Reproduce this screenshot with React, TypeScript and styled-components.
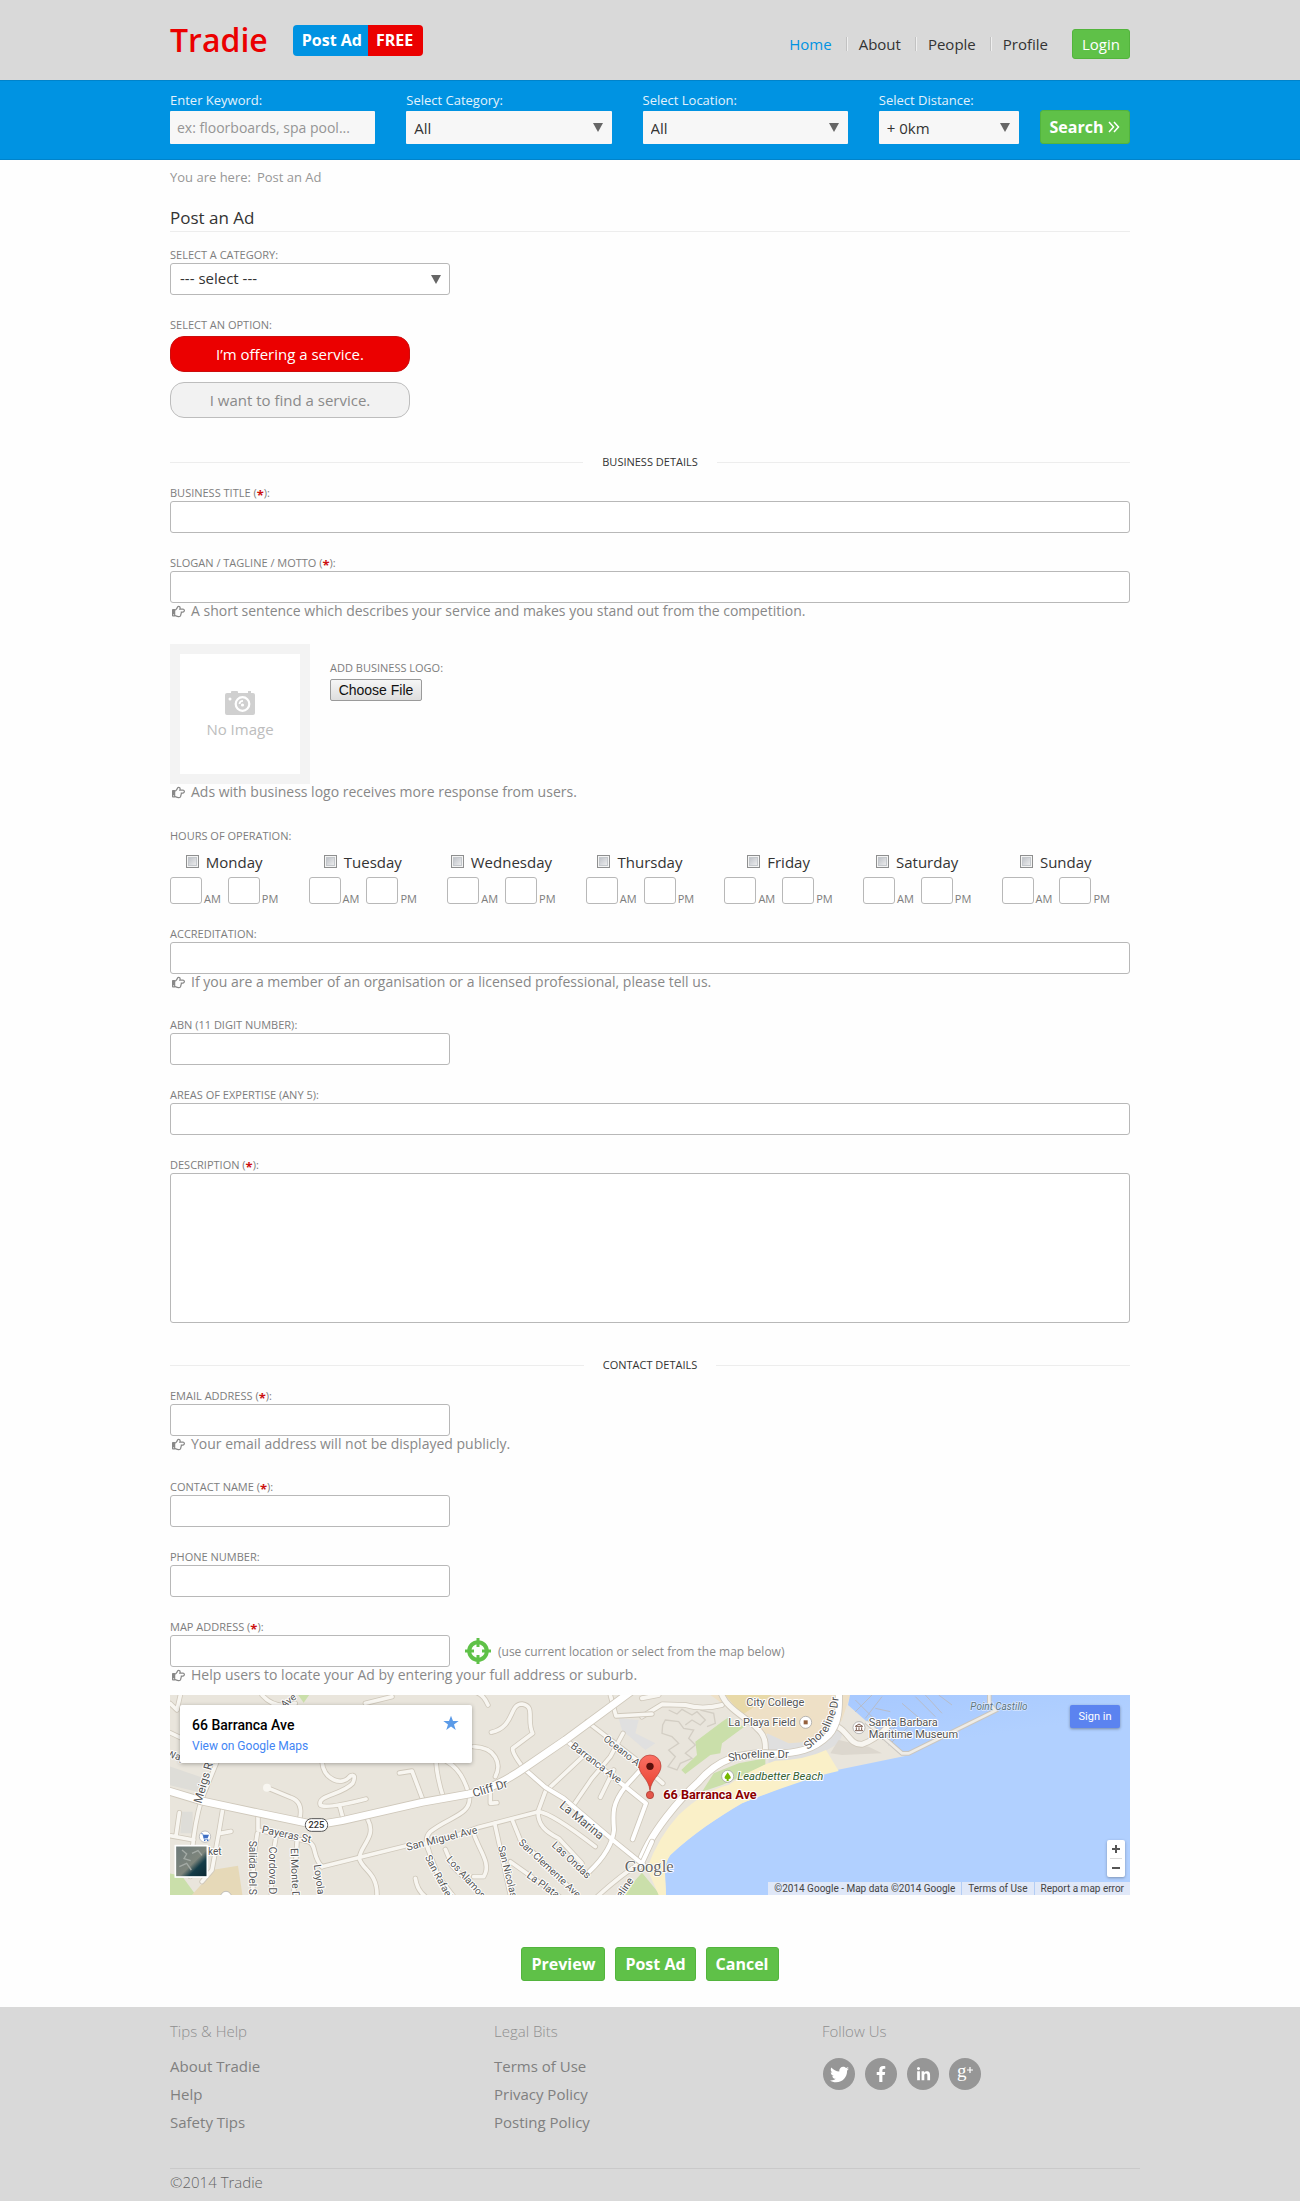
import React, { useState } from "react";
import styled, { createGlobalStyle, css } from "styled-components";
import { FaRegHandPointRight, FaTwitter, FaFacebookF, FaLinkedinIn } from "react-icons/fa";

const color = {
  blue: "#0093e2",
  red: "#eb0000",
  green: "#5fc148",
  greenEdge: "#53b43d",
  grey: "#d9d9d9",
  line: "#ededed",
  edge: "#b8b8b8",
  label: "#7d7d7d",
  hint: "#888888",
  ink: "#333333",
};

const GlobalStyle = createGlobalStyle`
  *, *::before, *::after { box-sizing: border-box; }
  body { margin: 0; background: #fefefe; color: ${color.ink}; }
  body, input, select, textarea, button {
    font-family: "Open Sans", "Noto Sans", sans-serif;
    font-size: 15px;
  }
  a { color: inherit; text-decoration: none; }
  button { cursor: pointer; }
`;

const Container = styled.div`
  max-width: 960px;
  margin: 0 auto;
`;

/* ---------- header ---------- */

const Header = styled.header`
  background: ${color.grey};
`;

const HeaderRow = styled(Container)`
  display: flex;
  align-items: center;
  height: 80px;
`;

const Logo = styled.a`
  color: ${color.red};
  font-size: 32px;
  font-weight: 600;
  line-height: 44px;
`;

const PostFree = styled.a`
  display: flex;
  margin-left: 25px;
  border-radius: 4px;
  overflow: hidden;
  color: #fff;
  font-size: 16px;
  font-weight: 700;
  line-height: 31px;
`;

const PostFreePart = styled.span<{ $tone: string }>`
  padding: 0 9px;
  background: ${(p) => p.$tone};
  & + & {
    padding-left: 8px;
    padding-right: 10px;
  }
  &:first-child {
    padding-right: 6px;
  }
`;

const Nav = styled.nav`
  display: flex;
  align-items: center;
  margin-left: auto;
  padding-top: 8px;
`;

const NavLink = styled.a<{ $active?: boolean }>`
  padding: 0 14px 0 12px;
  line-height: 14px;
  color: ${(p) => (p.$active ? color.blue : color.ink)};
  font-weight: ${(p) => (p.$active ? 500 : 400)};
  & + & {
    border-left: 1px solid #c2c2c2;
    box-shadow: inset 1px 0 0 #efefef;
  }
`;

const greenButton = css`
  border: 1px solid ${color.greenEdge};
  border-radius: 3px;
  background: ${color.green};
  color: #fff;
`;

const LoginLink = styled.a`
  ${greenButton}
  margin-left: 10px;
  padding: 0 9px;
  line-height: 28px;
`;

/* ---------- search bar ---------- */

const SearchBar = styled.div`
  background: ${color.blue};
  border-top: 1px solid #0083ca;
  border-bottom: 1px solid #0083ca;
`;

const SearchRow = styled(Container)`
  display: flex;
  gap: 21px;
  align-items: flex-end;
  height: 78px;
  padding-bottom: 15px;
`;

const SearchFields = styled.div`
  display: grid;
  flex: 1;
  grid-template-columns: 205fr 205fr 205fr 140fr;
  column-gap: 31px;
`;

const SearchField = styled.div`
  display: flex;
  flex-direction: column;
  & label {
    color: #e3f2fc;
    font-size: 13px;
    line-height: 22px;
  }
`;

const flatBox = css`
  width: 100%;
  height: 33px;
  border: 0;
  border-radius: 1px;
  background: #f7f7f7;
`;

const KeywordInput = styled.input`
  ${flatBox}
  padding: 0 7px;
  font-size: 14px;
  &::placeholder {
    color: #959595;
    opacity: 1;
  }
`;

const SelectShell = styled.div`
  display: grid;
  & > * {
    grid-area: 1 / 1;
  }
  & > svg {
    place-self: center end;
    margin-right: 9px;
    pointer-events: none;
  }
`;

const FlatSelect = styled.select`
  ${flatBox}
  appearance: none;
  padding: 0 8px;
  color: ${color.ink};
`;

const SearchButton = styled.button`
  ${greenButton}
  display: flex;
  align-items: center;
  justify-content: center;
  gap: 5px;
  width: 90px;
  height: 34px;
  padding: 0;
  font-size: 16px;
  font-weight: 700;
`;

/* ---------- form ---------- */

const Breadcrumb = styled.nav`
  display: flex;
  gap: 6px;
  padding-top: 8px;
  color: #979797;
  font-size: 13px;
  line-height: 18px;
`;

const PageTitle = styled.h1`
  margin: 20px 0 15px;
  padding-bottom: 1px;
  border-bottom: 1px solid ${color.line};
  font-size: 17px;
  font-weight: 400;
  line-height: 24px;
`;

const Field = styled.div<{ $space?: number }>`
  margin-bottom: ${(p) => p.$space ?? 22}px;
`;

const labelText = css`
  display: block;
  color: ${color.label};
  font-size: 11px;
  line-height: 16px;
`;

const Label = styled.label`
  ${labelText}
`;

const GroupLabel = styled.div`
  ${labelText}
`;

const Star = styled.span`
  color: #cc1111;
  font-weight: 700;
  font-size: 13px;
  line-height: 0;
  vertical-align: -3px;
`;

const outlined = css`
  display: block;
  border: 1px solid ${color.edge};
  border-radius: 3px;
  background: #fff;
  color: ${color.ink};
`;

const TextInput = styled.input<{ $short?: boolean }>`
  ${outlined}
  width: ${(p) => (p.$short ? "280px" : "100%")};
  height: 32px;
  padding: 0 9px;
`;

const TextArea = styled.textarea`
  ${outlined}
  width: 100%;
  height: 150px;
  padding: 6px 9px;
  resize: none;
`;

const CategoryShell = styled(SelectShell)`
  width: 280px;
`;

const CategorySelect = styled.select`
  ${outlined}
  appearance: none;
  width: 100%;
  height: 32px;
  padding: 0 9px 2px;
`;

const HintLine = styled.p`
  display: flex;
  align-items: center;
  gap: 6px;
  margin: 0;
  padding-left: 2px;
  color: ${color.hint};
  font-size: 14px;
  line-height: 16px;
`;

const OptionGroup = styled.div`
  display: grid;
  gap: 10px;
  width: 240px;
  margin-top: 3px;
`;

const OptionButton = styled.button`
  height: 36px;
  border: 1px solid #bdbdbd;
  border-radius: 14px;
  background: #f2f2f2;
  color: #8a8a8a;
  &[aria-pressed="true"] {
    border-color: #cc0d0d;
    background: ${color.red};
    color: #fff;
    font-weight: 500;
  }
`;

const SectionHeading = styled.h2<{ $top: number }>`
  display: flex;
  align-items: center;
  gap: 19px;
  margin: ${(p) => p.$top}px 0 15px;
  font-size: 11px;
  font-weight: 400;
  line-height: 16px;
  &::before,
  &::after {
    content: "";
    flex: 1;
    border-top: 1px solid ${color.line};
  }
`;

const LogoRow = styled.div`
  display: flex;
  gap: 20px;
`;

const NoImage = styled.div`
  display: flex;
  flex-direction: column;
  align-items: center;
  justify-content: center;
  width: 140px;
  height: 140px;
  padding-top: 6px;
  border: 10px solid #f3f3f3;
  background: #fff;
  color: #bdbdbd;
  line-height: 28px;
`;

const Upload = styled.div`
  padding-top: 16px;
`;

const FileInput = styled.input`
  display: block;
  width: 92px;
  height: 22px;
  margin-top: 3px;
  overflow: hidden;
  &::file-selector-button {
    width: 92px;
    height: 22px;
    margin: 0;
    padding: 0;
    border: 1px solid #9a9a9a;
    border-radius: 2px;
    background: linear-gradient(#f6f6f6, #dedede);
    color: #111;
    font: 14px "Liberation Sans", Arial, sans-serif;
  }
`;

const Days = styled.div`
  display: flex;
  justify-content: space-between;
  padding: 7px 20px 0 0;
`;

const Day = styled.div`
  display: flex;
  flex-direction: column;
  gap: 4px;
`;

const DayLabel = styled.label`
  display: flex;
  align-items: center;
  justify-content: center;
  gap: 7px;
  line-height: 22px;
`;

const Tick = styled.input`
  appearance: none;
  width: 13px;
  height: 13px;
  margin: 0 0 1px;
  border: 1px solid #8e8f8f;
  background: linear-gradient(135deg, #b5b9c0, #f6f6f6);
  box-shadow: inset 0 0 0 1px #f4f4f4, inset 0 0 0 2px #c4c8cc;
  &:checked {
    background: ${color.blue};
  }
`;

const Times = styled.div`
  display: flex;
  align-items: flex-end;
  gap: 7px;
`;

const Time = styled.label`
  ${labelText}
  display: flex;
  align-items: flex-end;
  gap: 2px;
  line-height: 11px;
`;

const TimeInput = styled.input`
  ${outlined}
  width: 32px;
  height: 27px;
  padding: 0 4px;
  font-size: 13px;
`;

const AddressRow = styled.div`
  display: flex;
  align-items: center;
  color: ${color.hint};
  font-size: 12px;
`;

const LocateButton = styled.button`
  display: flex;
  margin: 0 7px 0 15px;
  padding: 0;
  border: 0;
  background: none;
`;

/* ---------- map ---------- */

const MapFrame = styled.div`
  position: relative;
  height: 200px;
  margin-top: 12px;
  overflow: hidden;
  font-family: Roboto, sans-serif;
  & > svg {
    display: block;
    width: 100%;
    height: 100%;
  }
`;

const PlaceCard = styled.div`
  position: absolute;
  top: 10px;
  left: 10px;
  display: flex;
  justify-content: space-between;
  width: 292px;
  height: 58px;
  padding: 10px 13px 0 12px;
  border-radius: 2px;
  background: #fff;
  box-shadow: 0 1px 4px rgba(0, 0, 0, 0.3);
`;

const PlaceName = styled.strong`
  display: block;
  color: #000;
  font-size: 14px;
  font-weight: 500;
  line-height: 21px;
`;

const PlaceLink = styled.a`
  color: #4285f4;
  font-size: 12px;
  line-height: 20px;
`;

const SignIn = styled.a`
  position: absolute;
  top: 10px;
  right: 10px;
  width: 50px;
  border-radius: 2px;
  background: #5b83f0;
  box-shadow: 0 1px 3px rgba(0, 0, 0, 0.35);
  color: #fff;
  font-size: 11px;
  line-height: 23px;
  text-align: center;
`;

const Zoom = styled.div`
  position: absolute;
  right: 5px;
  bottom: 18px;
  display: grid;
  width: 18px;
  padding: 0 3px;
  border-radius: 2px;
  background: #fff;
  box-shadow: 0 1px 3px rgba(0, 0, 0, 0.3);
`;

const ZoomButton = styled.button`
  display: grid;
  place-items: center;
  height: 18px;
  padding: 0;
  border: 0;
  background: none;
  & + & {
    height: 19px;
    border-top: 1px solid #dddddd;
  }
`;

const Attribution = styled.div`
  position: absolute;
  right: 0;
  bottom: 0;
  display: flex;
  color: #444;
  font-size: 10px;
  line-height: 13px;
  & > * {
    padding: 0 6px;
    background: rgba(240, 240, 245, 0.75);
  }
  & > * + * {
    border-left: 1px solid #b3cdf5;
  }
`;

/* ---------- actions and footer ---------- */

const Actions = styled.div`
  display: flex;
  justify-content: center;
  gap: 10px;
  padding: 52px 0 26px;
`;

const ActionButton = styled.button`
  ${greenButton}
  height: 34px;
  padding: 0 9px;
  font-size: 16px;
  font-weight: 700;
`;

const Footer = styled.footer`
  background: ${color.grey};
  color: #808080;
`;

const FooterBody = styled(Container)`
  padding: 13px 0 9px;
`;

const FooterColumns = styled.div`
  display: grid;
  grid-template-columns: 324fr 328fr 308fr;
  padding-bottom: 32px;
`;

const FooterHeading = styled.h3`
  margin: 0 0 10px;
  color: #8f8f8f;
  font-size: 15px;
  font-weight: 300;
  line-height: 22px;
`;

const FooterLinks = styled.ul`
  margin: 0;
  padding: 0;
  list-style: none;
  line-height: 28px;
`;

const Socials = styled.div`
  display: flex;
  gap: 10px;
  padding: 6px 0 0 1px;
`;

const SocialLink = styled.a`
  display: grid;
  place-items: center;
  width: 32px;
  height: 32px;
  border-radius: 50%;
  background: #969696;
  color: #fff;
`;

const Copyright = styled.p`
  margin: 0 -10px 0 0;
  padding-top: 2px;
  border-top: 1px solid #cacaca;
  font-weight: 300;
  color: #666;
  line-height: 22px;
`;

/* ---------- parts ---------- */

const Arrow = () => (
  <svg width="10" height="9" viewBox="0 0 10 9" aria-hidden="true">
    <path d="M0 0h10L5 9z" fill="#666" />
  </svg>
);

const Required = () => (
  <>
    (<Star>*</Star>):
  </>
);

const Hint = ({ children }: { children: React.ReactNode }) => (
  <HintLine>
    <FaRegHandPointRight size={13} aria-hidden="true" />
    {children}
  </HintLine>
);

type TextFieldProps = {
  id: string;
  label: string;
  required?: boolean;
  short?: boolean;
  hint?: string;
  space?: number;
};

const TextField = ({ id, label, required, short, hint, space }: TextFieldProps) => (
  <Field $space={space}>
    <Label htmlFor={id}>
      {label}
      {required ? <> <Required /></> : ":"}
    </Label>
    <TextInput id={id} $short={short} />
    {hint && <Hint>{hint}</Hint>}
  </Field>
);

const SearchSelect = ({ id, label, value }: { id: string; label: string; value: string }) => (
  <SearchField>
    <label htmlFor={id}>{label}</label>
    <SelectShell>
      <FlatSelect id={id}>
        <option>{value}</option>
      </FlatSelect>
      <Arrow />
    </SelectShell>
  </SearchField>
);

const Camera = () => (
  <svg width="30" height="24" viewBox="0 0 30 24" aria-hidden="true">
    <path
      fill="#d0d0d0"
      d="M2 2h4V1q0-1 1-1h5q1 0 1 1v1h10V0h3v2h2q2 0 2 2v18q0 2-2 2H2q-2 0-2-2V4q0-2 2-2z"
    />
    <circle cx="5" cy="8" r="1.500" fill="#fff" />
    <circle cx="17.500" cy="13" r="6.800" fill="none" stroke="#fff" strokeWidth="2.200" />
    <path d="M14.500 13a3.500 3.500 0 0 1 3.500-3.200" fill="none" stroke="#fff" strokeWidth="1.800" />
    <circle cx="17.500" cy="14" r="1.600" fill="#fff" />
  </svg>
);

const Target = () => (
  <svg width="26" height="26" viewBox="0 0 26 26" aria-hidden="true">
    <circle cx="13" cy="13" r="8.800" fill="none" stroke={color.green} strokeWidth="4" />
    <path
      d="M13 0v9M13 17v9M0 13h9M17 13h9"
      stroke={color.green}
      strokeWidth="3"
    />
  </svg>
);

/* The map is drawn in units of a third of a pixel. */
const leftMinor = [
  "M165 215L118 330Q98 400 92 470L85 560",
  "M480 215C485 270 540 290 565 258Q585 250 572 280C540 315 465 315 475 345Q490 358 612 327",
  "M315 293L385 322Q425 335 413 388",
  "M533 348L543 385",
  "M712 249L750 243L782 328",
  "M822 215Q825 265 845 325",
  "M855 215C900 240 915 290 922 318C930 375 860 380 805 425Q785 445 800 480",
  "M935 170C1000 172 1020 220 1000 260",
  "M988 127C1060 110 1040 42 1080 42C1122 48 1092 90 1112 130L1052 175Q1050 190 1085 235",
  "M978 45Q965 15 945 8",
  "M985 290L985 340L1005 338",
  "M1275 95L1470 245",
  "M1383 130L1345 200L1290 265L1235 345",
  "M1262 200L1150 305L1128 365",
  "M1355 240L1315 322",
  "M1345 15L1362 78L1470 72",
  "M480 530L730 468L830 455L950 412L1130 365Q1170 370 1300 470",
  "M618 390C645 440 592 470 592 505C600 540 645 545 645 615",
  "M288 380L288 420L440 455C465 465 450 500 480 530",
  "M1128 365C1128 405 1150 425 1190 445L1260 520",
  "M998 400L1020 500L1045 615",
  "M1050 388L1075 450L1215 585",
  "M1045 515L1200 625",
  "M935 430C950 480 990 520 965 560L935 560",
  "M795 470L830 560L875 620",
  "M850 478L872 530L955 610",
  "M760 565Q765 600 790 620",
  "M286 430Q270 520 273 615",
  "M342 440Q325 530 328 615",
  "M405 455L395 615",
  "M182 358L170 430L150 540L120 575M175 430L207 424",
  "M52 368L42 438M24 437L95 450",
  "M1440 515Q1370 560 1300 625",
  "M24 128L60 145M24 40L45 60L55 15",
  "M300 15Q340 60 400 40M610 40L690 20",
];

const leftStreets = [
  "M1085 235L1150 292L1205 325L1350 448L1445 525",
  "M1208 148L1390 290L1452 340L1412 448",
  "M1440 235L1390 290C1350 340 1352 370 1356 420Q1350 480 1282 545",
  "M1470 455L1440 520",
];

const cliffDrive = "M10 300L120 333L285 368L463 405L540 392L780 337L920 312Q1000 295 1090 232L1210 150L1420 -5";

const rightMinor = [
  "M0 80L60 43L130 45Q180 60 240 45",
  "M0 25L50 15",
  "M45 265L62 280",
];

const lots = [
  "M70 90L110 95L125 115L155 120L140 145L160 165L130 190L150 205L115 220L105 240L78 230L100 200L80 180L110 160L90 140L60 130L62 105Z",
  "M80 60L105 72L120 58L150 75L165 65L190 90L175 105L150 90L130 105",
  "M175 60L215 70L220 100L195 110",
];

type MapLabel = [text: string, x: number, y: number, angle: number, size: number];

const leftLabels: MapLabel[] = [
  ["Ave", 366, 55, -38, 30],
  ["Way", 12, 200, 15, 30],
  ["Meigs R", 118, 342, -74, 35],
  ["Cliff Dr", 936, 322, -17, 35],
  ["Payeras St", 298, 428, 12, 32],
  ["Salida Del S", 260, 452, 90, 31],
  ["Cordova D", 322, 470, 90, 31],
  ["El Monte D", 386, 475, 88, 31],
  ["Loyola", 455, 525, 82, 31],
  ["San Miguel Ave", 736, 482, -14, 32],
  ["San Rafael", 788, 502, 62, 30],
  ["Los Alamos", 852, 510, 48, 30],
  ["San Nicolas", 1008, 470, 76, 30],
  ["San Clemente Ave", 1068, 460, 43, 30],
  ["Las Ondas", 1168, 468, 43, 31],
  ["La Plata", 1092, 560, 36, 31],
  ["La Marina", 1190, 350, 39, 36],
  ["Barranca Ave", 1224, 172, 37, 31],
  ["Oceano Ave", 1322, 150, 38, 30],
  ["Shoreline", 1340, 680, -55, 32],
  ["ket", 138, 496, 0, 30],
];

const rightLabels: MapLabel[] = [
  ["City College", 313, 47, 0, 33],
  ["La Playa Field", 259, 107, 0, 33],
  ["Santa Barbara", 680, 107, 0, 33],
  ["Maritime Museum", 680, 143, 0, 33],
];

const MapText = ({ items }: { items: MapLabel[] }) => (
  <g fill="#555" stroke="#fff" strokeWidth="6" strokeLinejoin="round" paintOrder="stroke">
    {items.map(([text, x, y, angle, size]) => (
      <text key={text} fontSize={size} transform={`translate(${x} ${y}) rotate(${angle})`}>
        {text}
      </text>
    ))}
  </g>
);

const Roads = ({ paths, width, fill = "#f8f6f1" }: { paths: string[]; width: number; fill?: string }) => (
  <g fill="none" strokeLinecap="round" strokeLinejoin="round">
    {paths.map((d) => (
      <path key={d} d={d} stroke="#cfc8bb" strokeWidth={width + 5} />
    ))}
    {paths.map((d) => (
      <path key={d} d={d} stroke={fill} strokeWidth={width} />
    ))}
  </g>
);

const MapDrawing = () => (
  <svg viewBox="0 0 2880 600" preserveAspectRatio="xMidYMid slice" role="img" aria-label="Map of 66 Barranca Ave">
    <defs>
      <linearGradient id="sea" x1="0" y1="0" x2="0.350" y2="1">
        <stop offset="0" stopColor="#a3c6ff" />
        <stop offset="0.400" stopColor="#b1d0ff" />
      </linearGradient>
      <linearGradient id="pin" x1="0" y1="0" x2="0" y2="1">
        <stop offset="0" stopColor="#fb7064" />
        <stop offset="1" stopColor="#e8402f" />
      </linearGradient>
      <linearGradient id="photo" x1="0" y1="0" x2="1" y2="1">
        <stop offset="0" stopColor="#6c7a7a" />
        <stop offset="0.550" stopColor="#7e857c" />
        <stop offset="0.700" stopColor="#143c48" />
        <stop offset="1" stopColor="#0a2731" />
      </linearGradient>
    </defs>
    <rect width="2880" height="600" fill="#e9e5dc" />

    <g transform="translate(1416 -15)">
      <path d="M205 15H625L600 90L545 150L440 165L385 140L290 80L240 40Z" fill="#eee0c6" />
      <path d="M250 15H390L300 75Z" fill="#e8d9a8" />
      <path d="M-70 85L-10 90L-20 130L40 160L10 180L-60 120Z" fill="#e0e0e0" />
      <path d="M375 130L440 160L500 155L560 120L610 110L590 160L520 200L380 220Z" fill="#dfdfdf" />
      <path d="M240 95L262 80L270 105L310 108L240 160L235 190L205 195L130 252L118 240L165 195L160 155Z" fill="#cadfaa" />
      <path d="M180 305L215 250L290 220L370 205V225L320 250L240 285Z" fill="#cadfaa" />
      <path d="M0 548L55 615H-60Z" fill="#cadfaa" />
      <path
        d="M625 10L618 45L680 100L775 188L800 196L720 212L585 240C500 258 350 320 300 340C230 380 150 435 85 495C60 530 72 570 72 615H1480V10Z"
        fill="url(#sea)"
      />
      <path
        d="M552 180L590 243C500 262 350 320 300 340C230 380 150 435 85 495C60 530 72 570 72 615H50L15 535Q50 440 110 375Q190 300 260 285Q330 235 400 212Q490 210 552 180Z"
        fill="#faf0c8"
      />
      <path d="M590 150L680 170L720 190L600 195L565 190Z" fill="#dcd7ce" />
      <g stroke="#b7bcc9" strokeWidth="3" fill="none">
        <path d="M640 30L700 90M690 15L640 65M720 20L670 85M700 55L745 65M720 150L775 95M740 165L800 110M720 90L770 140M780 40L850 100M820 20L880 80M850 15L900 70M890 15L930 45" />
      </g>
      <path d="M672 95L780 190L800 190L1060 62L1042 40V15" fill="none" stroke="#c9c6c0" strokeWidth="14" />
      <path d="M672 95L780 190L800 190L1060 62L1042 40V15" fill="none" stroke="#efece6" strokeWidth="8" />
      <g fill="none" stroke="#d3cec4" strokeWidth="4">
        {lots.map((d) => (
          <path key={d} d={d} />
        ))}
      </g>
      <Roads paths={rightMinor} width={12} />
      <Roads paths={["M235 0C245 55 320 85 345 115C375 140 370 170 370 190", "M590 112C620 130 625 165 660 163Q700 150 735 112"]} width={15} />
      <Roads
        paths={["M-10 530C20 430 120 320 170 275C230 205 290 192 370 190C470 195 520 175 560 135C592 100 592 50 590 0"]}
        width={19}
        fill="#fff"
      />
    </g>

    <g transform="translate(-24 -15)">
      <path d="M405 10H445L425 38Z" fill="#cadfaa" />
      <path d="M20 228L118 262V308L20 285ZM60 365H92V430H55Z" fill="#deddd8" />
      <path d="M20 550L60 558L105 620H20Z" fill="#cadfaa" />
      <path d="M150 540L228 527L242 620H85L130 570Z" fill="#e6d9b8" />
      <Roads paths={leftMinor} width={11} />
      <Roads paths={leftStreets} width={12} fill="#fff" />
      <circle cx="315" cy="293" r="12" fill="#f8f6f1" />
      <Roads paths={[cliffDrive]} width={21} fill="#fff" />
      <rect x="430" y="386" width="67" height="38" rx="18" fill="#fff" stroke="#555" strokeWidth="3" />
      <text x="463" y="415" fontSize="28" fontWeight="500" textAnchor="middle" fill="#333">225</text>
      <MapText items={leftLabels} />
      <circle cx="129" cy="440" r="17" fill="#fff" stroke="#aaa" strokeWidth="2" />
      <path d="M123 434h18l-4 11h-12z" fill="#3f6fc4" />
      <path d="M117 431h5l5 17h12" fill="none" stroke="#3f6fc4" strokeWidth="2" />
      <path d="M126 449h4v4h-4zM135 449h4v4h-4z" fill="#3f6fc4" />
      <circle cx="192" cy="620" r="16" fill="#fff" stroke="#aaa" strokeWidth="2" />
      <rect x="40" y="467" width="96" height="94" fill="url(#photo)" stroke="#fff" strokeWidth="5" />
      <path d="M60 480l14 12l-8 14l20 6M90 490l18-8l12 14M52 530l22-10l14 20" fill="none" stroke="#a3aaa5" strokeWidth="4" />
      <text
        x="1388" y="545" fontSize="50" fill="#666" stroke="#fff" strokeWidth="5" paintOrder="stroke"
        fontFamily="'Liberation Serif', serif"
      >
        Google
      </text>
    </g>

    <g transform="translate(1416 -15)">
      <MapText items={rightLabels} />
      <g fill="#555" stroke="#fff" strokeWidth="6" strokeLinejoin="round" paintOrder="stroke" fontSize="34">
        <text transform="translate(260 215) rotate(-9)">Shore</text>
        <text transform="translate(345 203)">line Dr</text>
        <text transform="translate(498 180) rotate(-42)">Shor</text>
        <text transform="translate(556 130) rotate(-68)">eline</text>
        <text transform="translate(586 56) rotate(-83)">Dr</text>
      </g>
      <text x="985" y="61" fontSize="30" fontStyle="italic" fill="#5b7680" stroke="#dbe8ff" strokeWidth="4" paintOrder="stroke">
        Point Castillo
      </text>
      <circle cx="491" cy="97" r="18" fill="#fff" stroke="#999" strokeWidth="2" />
      <rect x="485" y="91" width="12" height="12" fill="#94603d" />
      <circle cx="651" cy="113" r="18" fill="#fff" stroke="#999" strokeWidth="2" />
      <path d="M640 109l11-7l11 7zM643 112v8M651 112v8M659 112v8M639 122h24" fill="none" stroke="#7a5a4d" strokeWidth="3" />
      <circle cx="257" cy="259" r="18" fill="#fff" stroke="#999" strokeWidth="2" />
      <path d="M257 247l8 12q4 8-5 8v6h-6v-6q-9 0-5-8z" fill="#76b800" />
      <text x="286" y="270" fontSize="34" fontStyle="italic" fill="#35622f" stroke="#fff" strokeWidth="6" paintOrder="stroke">
        Leadbetter Beach
      </text>
      <circle cx="24" cy="315" r="11" fill="#e4564a" stroke="#a33329" strokeWidth="2" />
      <path
        d="M24 302C20 265-9 255-9 228a33 33 0 0 1 66 0C57 255 28 265 24 302Z"
        fill="url(#pin)" stroke="#b03a30" strokeWidth="2"
      />
      <circle cx="24" cy="229" r="11" fill="#5a100c" />
      <text x="64" y="328" fontSize="38" fontWeight="700" fill="#8b0000" stroke="#fff" strokeWidth="6" paintOrder="stroke">
        66 Barranca Ave
      </text>
    </g>
  </svg>
);

const days = ["Monday", "Tuesday", "Wednesday", "Thursday", "Friday", "Saturday", "Sunday"];
const options = ["I’m offering a service.", "I want to find a service."];

export default function App() {
  const [option, setOption] = useState(0);

  return (
    <>
      <GlobalStyle />
      <Header>
        <HeaderRow>
          <Logo href="#">Tradie</Logo>
          <PostFree href="#">
            <PostFreePart $tone={color.blue}>Post Ad</PostFreePart>
            <PostFreePart $tone={color.red}>FREE</PostFreePart>
          </PostFree>
          <Nav>
            <NavLink href="#" $active>Home</NavLink>
            <NavLink href="#">About</NavLink>
            <NavLink href="#">People</NavLink>
            <NavLink href="#">Profile</NavLink>
            <LoginLink href="#">Login</LoginLink>
          </Nav>
        </HeaderRow>
      </Header>

      <SearchBar>
        <SearchRow>
          <SearchFields>
            <SearchField>
              <label htmlFor="keyword">Enter Keyword:</label>
              <KeywordInput id="keyword" placeholder="ex: floorboards, spa pool..." />
            </SearchField>
            <SearchSelect id="search-category" label="Select Category:" value="All" />
            <SearchSelect id="search-location" label="Select Location:" value="All" />
            <SearchSelect id="search-distance" label="Select Distance:" value="+ 0km" />
          </SearchFields>
          <SearchButton type="button">
            Search
            <svg width="12" height="12" viewBox="0 0 12 12" aria-hidden="true">
              <path d="M1 1l4.500 5L1 11M6 1l4.500 5L6 11" fill="none" stroke="#fff" strokeWidth="1.500" />
            </svg>
          </SearchButton>
        </SearchRow>
      </SearchBar>

      <Container as="main">
        <Breadcrumb aria-label="Breadcrumb">
          <span>You are here:</span>
          <a href="#">Post an Ad</a>
        </Breadcrumb>
        <PageTitle>Post an Ad</PageTitle>

        <form onSubmit={(e) => e.preventDefault()}>
          <Field>
            <Label htmlFor="category">SELECT A CATEGORY:</Label>
            <CategoryShell>
              <CategorySelect id="category">
                <option>--- select ---</option>
              </CategorySelect>
              <Arrow />
            </CategoryShell>
          </Field>
          <Field $space={0}>
            <GroupLabel id="option-label">SELECT AN OPTION:</GroupLabel>
            <OptionGroup role="group" aria-labelledby="option-label">
              {options.map((text, i) => (
                <OptionButton key={text} type="button" aria-pressed={option === i} onClick={() => setOption(i)}>
                  {text}
                </OptionButton>
              ))}
            </OptionGroup>
          </Field>

          <SectionHeading $top={36}>BUSINESS DETAILS</SectionHeading>
          <TextField id="title" label="BUSINESS TITLE" required />
          <TextField
            id="slogan"
            label="SLOGAN / TAGLINE / MOTTO"
            required
            hint="A short sentence which describes your service and makes you stand out from the competition."
            space={25}
          />
          <Field $space={28}>
            <LogoRow>
              <NoImage>
                <Camera />
                No Image
              </NoImage>
              <Upload>
                <Label htmlFor="logo">ADD BUSINESS LOGO:</Label>
                <FileInput id="logo" type="file" />
              </Upload>
            </LogoRow>
            <Hint>Ads with business logo receives more response from users.</Hint>
          </Field>
          <Field>
            <GroupLabel>HOURS OF OPERATION:</GroupLabel>
            <Days>
              {days.map((day) => (
                <Day key={day}>
                  <DayLabel>
                    <Tick type="checkbox" />
                    {day}
                  </DayLabel>
                  <Times>
                    <Time>
                      <TimeInput aria-label={`${day} opening time`} />
                      AM
                    </Time>
                    <Time>
                      <TimeInput aria-label={`${day} closing time`} />
                      PM
                    </Time>
                  </Times>
                </Day>
              ))}
            </Days>
          </Field>
          <TextField
            id="accreditation"
            label="ACCREDITATION"
            hint="If you are a member of an organisation or a licensed professional, please tell us."
            space={27}
          />
          <TextField id="abn" label="ABN (11 DIGIT NUMBER)" short />
          <TextField id="expertise" label="AREAS OF EXPERTISE (ANY 5)" />
          <Field $space={0}>
            <Label htmlFor="description">
              DESCRIPTION <Required />
            </Label>
            <TextArea id="description" />
          </Field>

          <SectionHeading $top={34}>CONTACT DETAILS</SectionHeading>
          <TextField
            id="email"
            label="EMAIL ADDRESS"
            required
            short
            hint="Your email address will not be displayed publicly."
            space={27}
          />
          <TextField id="contact" label="CONTACT NAME" required short />
          <TextField id="phone" label="PHONE NUMBER" short />
          <Field $space={0}>
            <Label htmlFor="address">
              MAP ADDRESS <Required />
            </Label>
            <AddressRow>
              <TextInput id="address" $short />
              <LocateButton type="button" aria-label="Use current location">
                <Target />
              </LocateButton>
              (use current location or select from the map below)
            </AddressRow>
            <Hint>Help users to locate your Ad by entering your full address or suburb.</Hint>
          </Field>

          <MapFrame>
            <MapDrawing />
            <PlaceCard>
              <div>
                <PlaceName>66 Barranca Ave</PlaceName>
                <PlaceLink href="#">View on Google Maps</PlaceLink>
              </div>
              <svg width="16" height="16" viewBox="0 0 24 24" aria-hidden="true">
                <path d="M12 1l3 8h8.500l-7 5.200 2.600 8.300L12 17.400l-7.100 5.100 2.600-8.300L.500 9H9z" fill="#5b9be8" />
              </svg>
            </PlaceCard>
            <SignIn href="#">Sign in</SignIn>
            <Zoom>
              <ZoomButton type="button" aria-label="Zoom in">
                <svg width="8" height="8" viewBox="0 0 8 8">
                  <path d="M4 0v8M0 4h8" stroke="#555" strokeWidth="2" />
                </svg>
              </ZoomButton>
              <ZoomButton type="button" aria-label="Zoom out">
                <svg width="8" height="8" viewBox="0 0 8 8">
                  <path d="M0 4h8" stroke="#555" strokeWidth="2" />
                </svg>
              </ZoomButton>
            </Zoom>
            <Attribution>
              <span>©2014 Google - Map data ©2014 Google</span>
              <a href="#">Terms of Use</a>
              <a href="#">Report a map error</a>
            </Attribution>
          </MapFrame>

          <Actions>
            <ActionButton type="button">Preview</ActionButton>
            <ActionButton type="submit">Post Ad</ActionButton>
            <ActionButton type="reset">Cancel</ActionButton>
          </Actions>
        </form>
      </Container>

      <Footer>
        <FooterBody>
          <FooterColumns>
            <div>
              <FooterHeading>Tips &amp; Help</FooterHeading>
              <FooterLinks>
                <li><a href="#">About Tradie</a></li>
                <li><a href="#">Help</a></li>
                <li><a href="#">Safety Tips</a></li>
              </FooterLinks>
            </div>
            <div>
              <FooterHeading>Legal Bits</FooterHeading>
              <FooterLinks>
                <li><a href="#">Terms of Use</a></li>
                <li><a href="#">Privacy Policy</a></li>
                <li><a href="#">Posting Policy</a></li>
              </FooterLinks>
            </div>
            <div>
              <FooterHeading>Follow Us</FooterHeading>
              <Socials>
                <SocialLink href="#" aria-label="Twitter"><FaTwitter size={19} /></SocialLink>
                <SocialLink href="#" aria-label="Facebook"><FaFacebookF size={16} /></SocialLink>
                <SocialLink href="#" aria-label="LinkedIn"><FaLinkedinIn size={15} /></SocialLink>
                <SocialLink href="#" aria-label="Google Plus">
                  <svg width="32" height="32" viewBox="0 0 32 32" fill="#fff" fontFamily="'Liberation Serif', serif">
                    <text x="8" y="19" fontSize="19">g</text>
                    <path d="M21 9v6M18 12h6" stroke="#fff" strokeWidth="1.200" />
                  </svg>
                </SocialLink>
              </Socials>
            </div>
          </FooterColumns>
          <Copyright>©2014 Tradie</Copyright>
        </FooterBody>
      </Footer>
    </>
  );
}
